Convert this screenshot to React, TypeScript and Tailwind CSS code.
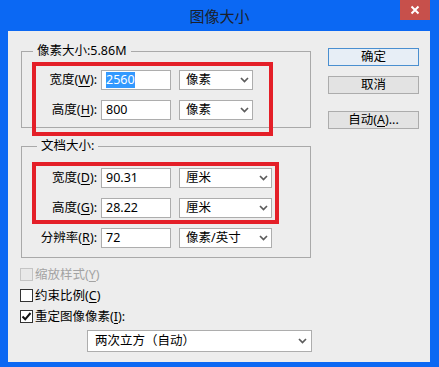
import React from "react";

const font = "font-['Noto_Sans','Noto_Sans_CJK_SC',sans-serif]";

const Chevron = () => (
  <svg width="9" height="6" viewBox="0 0 9 6" className="shrink-0">
    <path d="M1 1 L4.5 4.5 L8 1" fill="none" stroke="#5c5c5c" strokeWidth="1.7" />
  </svg>
);

const U = ({ children }: { children: React.ReactNode }) => (
  <span className="underline underline-offset-2">{children}</span>
);

function Select({ text, width, className = "" }: { text: string; width: string; className?: string }) {
  return (
    <div
      className={`${width} h-[20px] border border-[#adadad] bg-white flex items-center justify-between pl-[6px] pr-[3px] ${className}`}
    >
      <span className="leading-[16px]">{text}</span>
      <Chevron />
    </div>
  );
}

function Field({
  label,
  mn,
  value,
  unit,
  selW,
  selected = false,
}: {
  label: string;
  mn: string;
  value: string;
  unit: string;
  selW: string;
  selected?: boolean;
}) {
  return (
    <div className="flex items-center h-[20px]">
      <span className="w-[75px] text-right leading-[16px]">
        {label}(<U>{mn}</U>):
      </span>
      <div className="ml-[4px] w-[70px] h-[20px] border border-[#adadad] bg-white flex items-center pl-[4px]">
        {selected ? (
          <span className="bg-[#3399ff] text-white leading-[16px]">{value}</span>
        ) : (
          <span className="leading-[16px]">{value}</span>
        )}
      </div>
      <Select text={unit} width={selW} className="ml-[8px]" />
    </div>
  );
}

function Check({ state, children }: { state: "off" | "on" | "disabled"; children: React.ReactNode }) {
  const box =
    state === "disabled"
      ? "border-[#c4c4c4] bg-[#e8e8e8]"
      : "border-[#333333] bg-white";
  return (
    <div className={`flex items-center h-[21px] ${state === "disabled" ? "text-[#a3a3a3]" : ""}`}>
      <div className={`w-[13px] h-[13px] border ${box} flex items-center justify-center`}>
        {state === "on" && (
          <svg width="11" height="11" viewBox="0 0 11 11">
            <path d="M1.5 5.5 L4.2 8.3 L9.5 2" fill="none" stroke="#111" strokeWidth="2" />
          </svg>
        )}
      </div>
      <span className="ml-[2px] leading-[16px]">{children}</span>
    </div>
  );
}

function Button({ children, primary = false, className = "" }: { children: React.ReactNode; primary?: boolean; className?: string }) {
  return (
    <div
      className={`w-[91px] h-[18px] border flex items-center justify-center leading-[16px] ${
        primary ? "border-[#4a8fd0] bg-[#e7eef6]" : "border-[#acacac] bg-[#e3e3e3]"
      } ${className}`}
    >
      {children}
    </div>
  );
}

export default function App() {
  return (
    <div className={`w-[439px] h-[367px] bg-[#0b68f3] flex flex-col text-[12.5px] text-black ${font}`}>
      {/* Title bar */}
      <div className="h-[31px] relative flex items-center justify-center">
        <span className="text-[15px] text-[#1b1f2a] leading-[20px]">图像大小</span>
        <div className="absolute right-[9px] top-0 w-[30px] h-[20px] bg-[#c7504b] flex items-center justify-center">
          <svg width="10" height="10" viewBox="0 0 10 10">
            <path d="M1.5 1.5 L8.5 8.5 M8.5 1.5 L1.5 8.5" stroke="#fff" strokeWidth="2" />
          </svg>
        </div>
      </div>

      {/* Client area */}
      <div className="flex-1 ml-[8px] mr-[9px] mb-[5px] bg-[#ededed] relative flex">
        <div className="ml-[13px] w-[290px] flex flex-col">
          <fieldset className="mt-[12px] border border-[#a9a9a9] pt-[11px] pb-[7px] flex flex-col gap-[10px]">
            <legend className="ml-[11px] px-[4px] leading-[16px]">像素大小:5.86M</legend>
            <Field label="宽度" mn="W" value="2560" unit="像素" selW="w-[74px]" selected />
            <Field label="高度" mn="H" value="800" unit="像素" selW="w-[74px]" />
          </fieldset>

          <fieldset className="mt-[10px] border border-[#a9a9a9] pt-[14px] pb-[9px] flex flex-col gap-[10px]">
            <legend className="ml-[15px] px-[4px] leading-[16px]">文档大小:</legend>
            <Field label="宽度" mn="D" value="90.31" unit="厘米" selW="w-[93px]" />
            <Field label="高度" mn="G" value="28.22" unit="厘米" selW="w-[93px]" />
            <Field label="分辨率" mn="R" value="72" unit="像素/英寸" selW="w-[93px]" />
          </fieldset>

          <div className="mt-[6px] -ml-[1px] flex flex-col">
            <Check state="disabled">
              缩放样式(<U>Y</U>)
            </Check>
            <Check state="off">
              约束比例(<U>C</U>)
            </Check>
            <Check state="on">
              重定图像像素(<U>I</U>):
            </Check>
          </div>

          <div className="mt-[3px] ml-[66px] w-[225px] h-[22px] border border-[#adadad] bg-white flex items-center justify-between pl-[7px] pr-[4px]">
            <span className="leading-[16px]">两次立方（自动）</span>
            <Chevron />
          </div>
        </div>

        <div className="ml-[17px] pt-[17px] flex flex-col">
          <Button primary>确定</Button>
          <Button className="mt-[10px]">取消</Button>
          <Button className="mt-[17px]">
            自动(<U>A</U>)...
          </Button>
        </div>

        {/* Red annotation boxes */}
        <div className="absolute left-[24px] top-[31px] w-[241px] h-[74px] border-[4px] border-[#e41f28] pointer-events-none" />
        <div className="absolute left-[24px] top-[131px] w-[247px] h-[62px] border-[4px] border-[#e41f28] pointer-events-none" />
      </div>
    </div>
  );
}
